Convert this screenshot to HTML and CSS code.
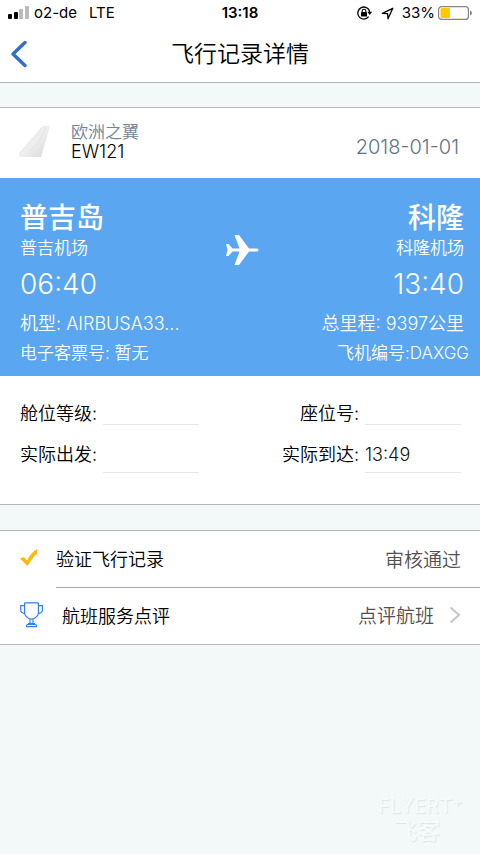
FILE: index.html
```html
<!DOCTYPE html>
<html lang="zh-CN">
<head>
<meta charset="utf-8">
<meta name="viewport" content="width=device-width, initial-scale=1">
<title>飞行记录详情</title>
<link rel="stylesheet" href="styles.css">
</head>
<body>
<div class="status">
  <div class="status-side">
    <svg class="signal" width="22" height="14" viewBox="0 0 22 14" aria-hidden="true">
      <rect x="0" y="8" width="4" height="5" rx="1" fill="#000"/>
      <rect x="6" y="6" width="4" height="7" rx="1" fill="#000"/>
      <rect x="11" y="3" width="4" height="10" rx="1" fill="#bbb"/>
      <rect x="17" y="0" width="4" height="13" rx="1" fill="#bbb"/>
    </svg>
    <span>o2-de</span>
    <span class="network">LTE</span>
  </div>
  <div class="clock">13:18</div>
  <div class="status-side status-end">
    <svg width="16" height="14" viewBox="0 0 16 14" aria-hidden="true">
      <path d="M11.600 10.700A6 6 0 1 1 12.700 5.800" fill="none" stroke="#000" stroke-width="1.300"/>
      <path d="M10.300 5.800h4.800l-2.400 3.200z" fill="#000"/>
      <rect x="4" y="6" width="6" height="4.500" rx=".6" fill="#000"/>
      <path d="M5.200 6.500V5a1.800 1.800 0 0 1 3.600 0v1.500" fill="none" stroke="#000" stroke-width="1.100"/>
    </svg>
    <svg class="locate" width="13" height="13" viewBox="0 0 13 13" aria-hidden="true">
      <path d="M1.300 6.300 11.800 1.300 7 11.800 6.600 6.600z" fill="none" stroke="#000" stroke-width="1.300" stroke-linejoin="round"/>
    </svg>
    <span class="charge">33%</span>
    <svg width="34" height="14" viewBox="0 0 34 14" aria-hidden="true">
      <rect x=".6" y=".6" width="29.800" height="12.800" rx="3" fill="#fff" stroke="#858585" stroke-width="1.200"/>
      <rect x="2.500" y="2" width="9.500" height="10" rx="1" fill="#ffc800"/>
      <path d="M32 4.500q2 .8 2 2.500t-2 2.500z" fill="#858585"/>
    </svg>
  </div>
</div>

<header class="nav">
  <button class="back" type="button" aria-label="返回">
    <svg width="18" height="28" viewBox="0 0 18 28"><path d="M15 2.500 3 14 15 25.500" fill="none" stroke="#316fc9" stroke-width="3.500" stroke-linecap="round" stroke-linejoin="round"/></svg>
  </button>
  <h1>飞行记录详情</h1>
</header>

<main>
  <section class="panel">
    <div class="airline">
      <svg width="32" height="32" viewBox="0 0 32 32" aria-hidden="true">
        <defs><linearGradient id="tail" x1="0" y1="0" x2="1" y2="1"><stop offset="0" stop-color="#dcdcdc"/><stop offset=".5" stop-color="#efefef"/><stop offset="1" stop-color="#d6d6d6"/></linearGradient></defs>
        <path d="M22 1.500 25 0h6l-9 31H0v-4z" fill="url(#tail)"/>
        <path d="M27 2 18 18 11 25" fill="none" stroke="#dadada" stroke-width=".6"/>
      </svg>
      <div class="carrier">
        <div class="carrier-name">欧洲之翼</div>
        <div class="flight-no">EW121</div>
      </div>
      <time class="date" datetime="2018-01-01">2018-01-01</time>
    </div>

    <div class="route">
      <div class="stop">
        <div class="city">普吉岛</div>
        <div class="airport">普吉机场</div>
        <div class="time">06:40</div>
        <div class="fact">机型: AIRBUSA33...</div>
        <div class="note">电子客票号: 暂无</div>
      </div>
      <svg class="plane" width="34" height="32" viewBox="0 0 34 32" aria-hidden="true">
        <path d="M1 10h2.500l4 4.500h7L9.500 1H14l10 13.500h8q1.500 0 1.500 1.500t-1.500 1.500h-8L14 31H9.500l5-13.500h-7l-4 4.500H1l1.600-6z" fill="#fff"/>
      </svg>
      <div class="stop arrival">
        <div class="city">科隆</div>
        <div class="airport">科隆机场</div>
        <div class="time">13:40</div>
        <div class="fact">总里程: 9397公里</div>
        <div class="note">飞机编号:DAXGG</div>
      </div>
    </div>

    <form class="details">
      <label for="cabin">舱位等级:</label><input id="cabin" type="text">
      <label for="seat">座位号:</label><input id="seat" type="text">
      <label for="departed">实际出发:</label><input class="tall" id="departed" type="text">
      <label for="arrived">实际到达:</label><input class="tall" id="arrived" type="text" value="13:49">
    </form>
  </section>

  <section class="panel actions">
    <a class="action" href="#verify">
      <svg width="18" height="18" viewBox="0 0 18 18" aria-hidden="true"><path d="M0 9.500 4 8l3 3.500Q11 3.500 17 0v4.500Q12 9 7.500 17z" fill="#ffb90a"/></svg>
      <span class="action-name">验证飞行记录</span>
      <span class="action-value">审核通过</span>
    </a>
    <a class="action review" href="#review">
      <svg width="24" height="26" viewBox="0 0 24 26" aria-hidden="true" fill="none" stroke="#2b83f6" stroke-width="1.200">
        <path d="M4.600 3.500V1.600Q4.600.8 5.400.8h12.200q.8 0 .8.800V11q0 2-1.800 3.700-2.400 2.500-5.100 2.500t-5.100-2.500Q4.600 13 4.600 11z"/>
        <path d="M4.600 3.600H.7v5Q.8 11 4.800 11.600M18.400 3.600h4v5q-.1 2.400-4.200 3"/>
        <path d="M10 17.300v4.400M13 17.300v4.400M8 21.700h7M6.600 24.700v-1.200q0-1 1-1h7.800q1 0 1 1v1.200z"/>
      </svg>
      <span class="action-name">航班服务点评</span>
      <span class="action-value">点评航班</span>
      <svg class="chevron" width="12" height="18" viewBox="0 0 12 18" aria-hidden="true"><path d="M1.500 1.500 10 9l-8.500 7.500" fill="none" stroke="#c4c4c9" stroke-width="2"/></svg>
    </a>
  </section>
</main>

<footer class="brand">
  <div class="brand-latin">FLYERT<span class="brand-plus">+</span></div>
  <div class="brand-name">飞客</div>
</footer>
</body>
</html>
```
FILE: styles.css
```css
* {
  box-sizing: border-box;
}

body {
  margin: 0;
  min-height: 100vh;
  display: flex;
  flex-direction: column;
  background: #f3f9f9;
  color: #000;
  font-family: Inter, "Noto Sans CJK SC", sans-serif;
  font-size: 18px;
  font-weight: 350;
}

svg {
  display: block;
  flex: none;
}

.status {
  display: flex;
  align-items: center;
  height: 26px;
  padding: 0 8px;
  background: #fff;
  font-size: 15px;
  font-weight: 400;
  line-height: 26px;
}

.status-side {
  flex: 1;
  display: flex;
  align-items: center;
}

.signal {
  margin-right: 4px;
}

.network {
  margin-left: 12px;
}

.clock {
  font-weight: 600;
}

.status-end {
  justify-content: flex-end;
}

.locate {
  margin: 0 8px;
}

.charge {
  margin-right: 3px;
}

.nav {
  display: grid;
  grid-template-columns: 48px 1fr 48px;
  align-items: center;
  height: 57px;
  background: #fff;
  border-bottom: 1px solid #b4b6b7;
}

.back {
  height: 56px;
  padding: 0 10px;
  border: 0;
  background: none;
}

.nav h1 {
  margin: 0;
  font-size: 23px;
  font-weight: 350;
  line-height: 32px;
  text-align: center;
}

.panel {
  margin-top: 24px;
  background: #fff;
  border-top: 1px solid #b4b6b7;
  border-bottom: 1px solid #b4b6b7;
}

.airline {
  display: flex;
  align-items: center;
  height: 70px;
  padding: 0 21px 2px 19px;
}

.carrier {
  flex: 1;
  margin-left: 20px;
}

.carrier-name {
  color: #708496;
  font-size: 17px;
  line-height: 20px;
}

.flight-no {
  line-height: 20px;
}

.date {
  padding-top: 10px;
  color: #607488;
  font-size: 20px;
  font-weight: 300;
}

.route {
  display: flex;
  padding: 22px 16px 10px 20px;
  background: #5aa6f1;
  color: #fff;
}

.stop {
  flex: 1;
}

.arrival {
  text-align: right;
}

.plane {
  margin-top: 34px;
}

.city {
  font-size: 28px;
  font-weight: 500;
  line-height: 36px;
}

.airport {
  font-size: 17px;
  line-height: 24px;
}

.time {
  font-size: 28px;
  line-height: 48px;
}

.fact {
  line-height: 32px;
}

.note {
  font-size: 17px;
  line-height: 26px;
}

.arrival .note {
  margin-right: -5px;
}

.details {
  display: grid;
  grid-template-columns: auto 96px 1fr 96px;
  gap: 12px 6px;
  padding: 26px 19px 31px 20px;
  line-height: 22px;
}

.details label {
  display: flex;
  align-items: center;
}

.details label:nth-of-type(even) {
  justify-content: flex-end;
}

.details input {
  width: 100%;
  height: 23px;
  padding: 0;
  border: 0;
  border-bottom: 1px solid #e4e6e7;
  background: none;
  color: #111;
  font: inherit;
}

.details .tall {
  height: 36px;
}

.actions {
  margin-top: 25px;
}

.action {
  display: flex;
  align-items: center;
  height: 56px;
  padding: 0 19px 2px 20px;
  color: #000;
  text-decoration: none;
}

.action-name {
  flex: 1;
  margin-left: 18px;
}

.action-value {
  color: #505050;
  font-size: 19px;
}

.review {
  position: relative;
  height: 57px;
}

.review::before {
  content: "";
  position: absolute;
  top: 0;
  left: 56px;
  right: 0;
  border-top: 1px solid #a6a8a9;
}

.chevron {
  margin-left: 15px;
}

.brand {
  width: 88px;
  margin: auto 14px 8px auto;
  color: #f6fafb;
  text-shadow: 1px 1px 1px #dfe5e7;
}

.brand-latin {
  display: flex;
  font-size: 20px;
  font-weight: 500;
  line-height: 20px;
}

.brand-plus {
  font-size: 16px;
  line-height: 10px;
}

.brand-name {
  padding-left: 16px;
  font-size: 23px;
  font-weight: 500;
  line-height: 30px;
}
```
